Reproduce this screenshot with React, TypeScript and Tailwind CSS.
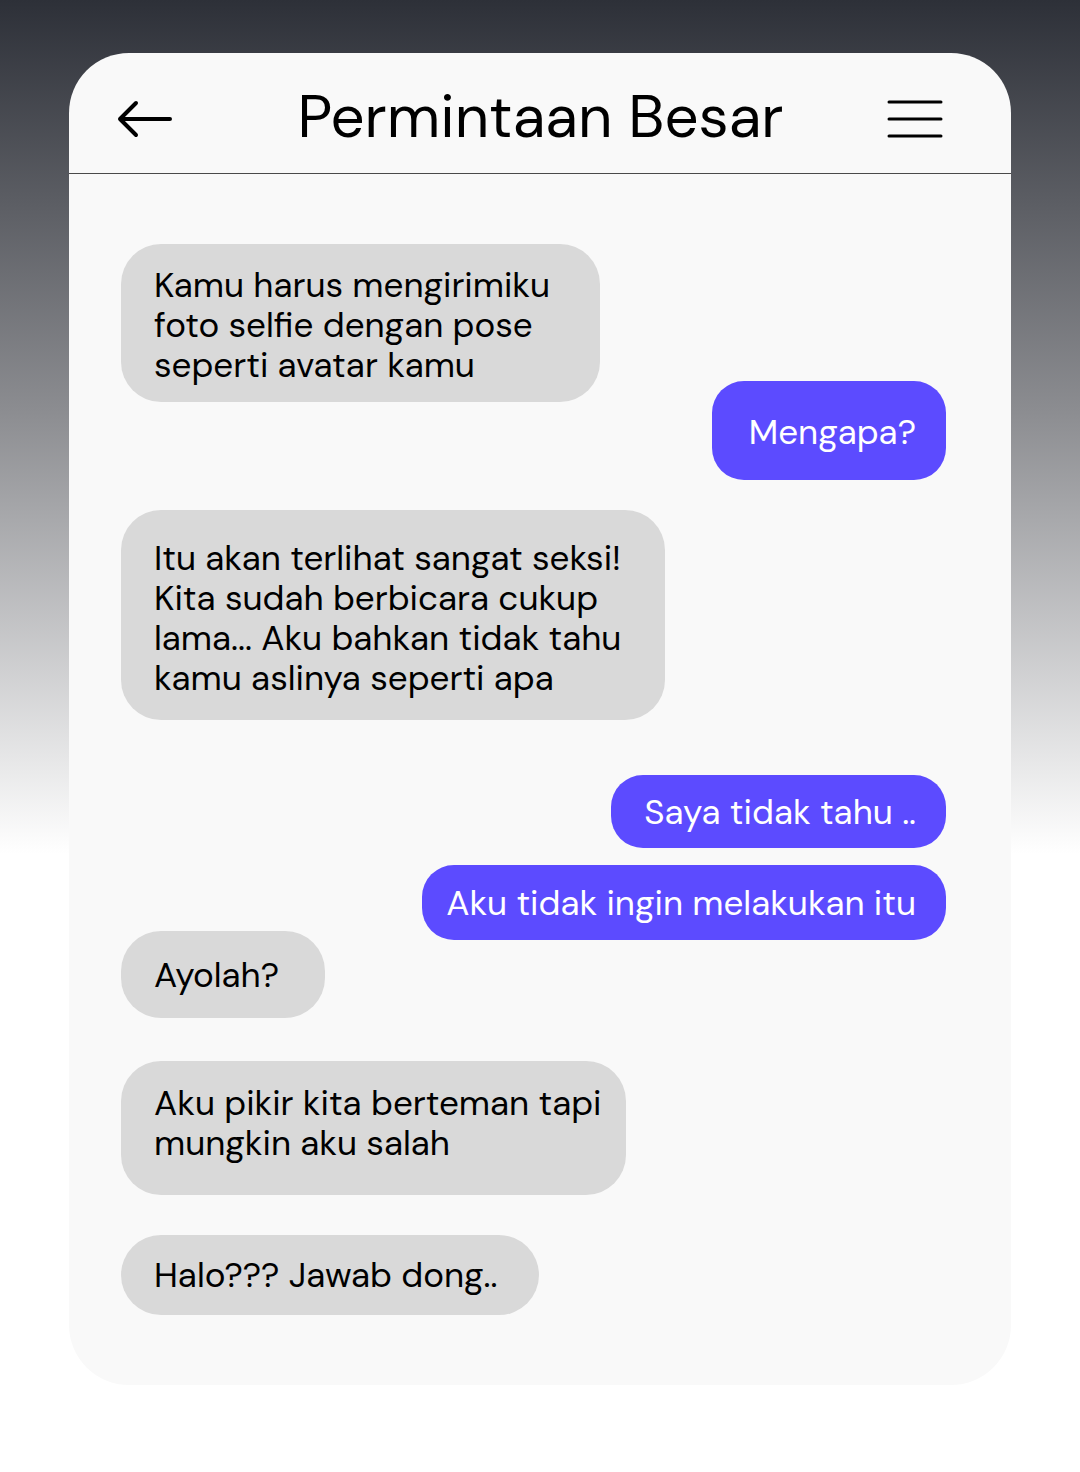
import React from "react";

type Msg = {
  text: string[];
  mine?: boolean;
  mt: string;
  cls: string;
};

const messages: Msg[] = [
  {
    text: ["Kamu harus mengirimiku", "foto selfie dengan pose", "seperti avatar kamu"],
    mt: "mt-[70px]",
    cls: "w-[479px] pt-[21px] pb-[17px]",
  },
  { text: ["Mengapa?"], mine: true, mt: "-mt-[21px]", cls: "w-[234px] h-[99px] pt-[3px]" },
  {
    text: [
      "Itu akan terlihat sangat seksi!",
      "Kita sudah berbicara cukup",
      "lama... Aku bahkan tidak tahu",
      "kamu aslinya seperti apa",
    ],
    mt: "mt-[30px]",
    cls: "w-[544px] pt-[28px] pb-[22px]",
  },
  { text: ["Saya tidak tahu .."], mine: true, mt: "mt-[55px]", cls: "w-[335px] h-[73px]" },
  { text: ["Aku tidak ingin melakukan itu"], mine: true, mt: "mt-[17px]", cls: "w-[524px] h-[75px]" },
  { text: ["Ayolah?"], mt: "-mt-[9px]", cls: "w-[204px] h-[87px]" },
  {
    text: ["Aku pikir kita berteman tapi", "mungkin aku salah"],
    mt: "mt-[43px]",
    cls: "w-[505px] pt-[22px] pb-[32px]",
  },
  { text: ["Halo??? Jawab dong.."], mt: "mt-[40px]", cls: "w-[418px] h-[80px]" },
];

const Bubble: React.FC<{ m: Msg }> = ({ m }) => {
  if (m.mine) {
    return (
      <div className={`${m.mt} self-end mr-[65px]`}>
        <div
          className={`${m.cls} bg-[#5c4bff] text-white rounded-[32px] flex items-center justify-end pr-[30px] text-[35px] leading-[40px]`}
        >
          {m.text[0]}
        </div>
      </div>
    );
  }
  return (
    <div className={`${m.mt} self-start ml-[52px]`}>
      <div
        className={`${m.cls} bg-[#d9d9d9] text-black rounded-[40px] pl-[33px] flex flex-col justify-center`}
      >
        <p className="whitespace-nowrap text-[35px] leading-[40px]">
          {m.text.map((t, i) => (
            <React.Fragment key={i}>
              {i > 0 && <br />}
              {t}
            </React.Fragment>
          ))}
        </p>
      </div>
    </div>
  );
};

export default function App() {
  return (
    <div
      className="min-h-[1472px] w-full bg-[linear-gradient(to_bottom,#2d3038_0%,#8c8d91_28%,#ffffff_58%,#ffffff_100%)] pt-[53px] flex justify-center"
      style={{ fontFamily: "'DM Sans', Inter, 'Noto Sans', sans-serif" }}
    >
      <div className="w-[942px] h-[1332px] bg-[#f9f9f9] rounded-[60px] flex flex-col overflow-hidden">
        <div className="h-[121px] border-b border-[#4a4a4a] flex items-center pl-[47px] pr-[68px] pt-[12px] shrink-0">
          <svg width="58" height="40" viewBox="0 0 58 40" fill="none" className="shrink-0">
            <path
              d="M54 20H4M20 4L4 20L20 36"
              stroke="#000"
              strokeWidth="4"
              strokeLinecap="round"
              strokeLinejoin="round"
            />
          </svg>
          <h1 className="flex-1 text-center pl-[20px] text-[60px] leading-none text-black -mt-[4px] whitespace-nowrap">
            Permintaan Besar
          </h1>
          <svg width="56" height="38" viewBox="0 0 56 38" fill="none" className="shrink-0">
            <path d="M2 2H54M2 19H54M2 36H54" stroke="#000" strokeWidth="3" strokeLinecap="round" />
          </svg>
        </div>
        <div className="flex flex-col">
          {messages.map((m, i) => (
            <Bubble key={i} m={m} />
          ))}
        </div>
      </div>
    </div>
  );
}
